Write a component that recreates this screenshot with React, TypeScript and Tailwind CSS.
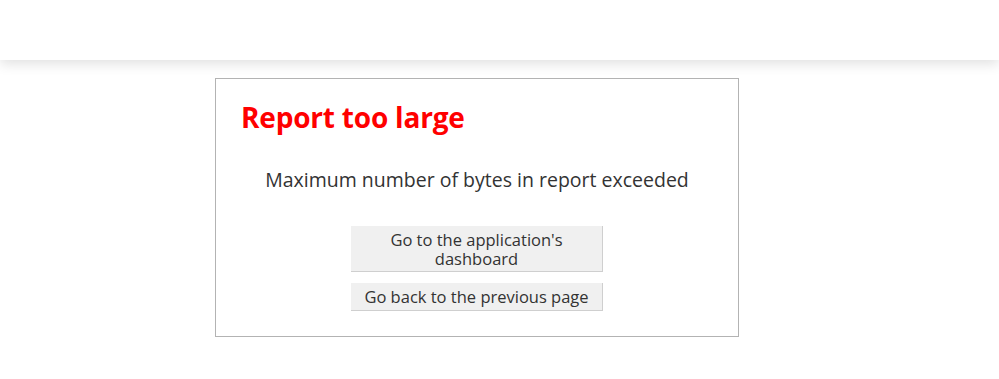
export default function App() {
    return (
        <div className="min-h-[379px] bg-white" style={{ fontFamily: '"Open Sans", Lato, sans-serif' }}>
            <div className="h-[60px] bg-white shadow-[0_4px_12px_rgba(0,0,0,0.12)] relative z-10" />
            <div className="pt-[18px] pl-[215px]">
                <div className="w-[524px] h-[259px] border border-[#b3b3b3] bg-white px-[25px] pt-[20px]">
                    <h1 className="text-[28px] font-bold text-[#ff0000] leading-[36px] tracking-[-0.2px]">Report too large</h1>
                    <p className="mt-[33px] text-center text-[19.5px] leading-[24px] text-[#333]">
                        Maximum number of bytes in report exceeded
                    </p>
                    <div className="mt-[34px] flex flex-col items-center gap-[11px]">
                        <button className="w-[252px] h-[46px] bg-[#f0f0f0] border-b border-r border-[#cfcfcf] text-[16.5px] leading-[19px] text-[#333] px-4">
                            Go to the application's dashboard
                        </button>
                        <button className="w-[252px] h-[28px] bg-[#f0f0f0] border-b border-r border-[#cfcfcf] text-[16.5px] leading-[19px] text-[#333]">
                            Go back to the previous page
                        </button>
                    </div>
                </div>
            </div>
        </div>
    );
}
